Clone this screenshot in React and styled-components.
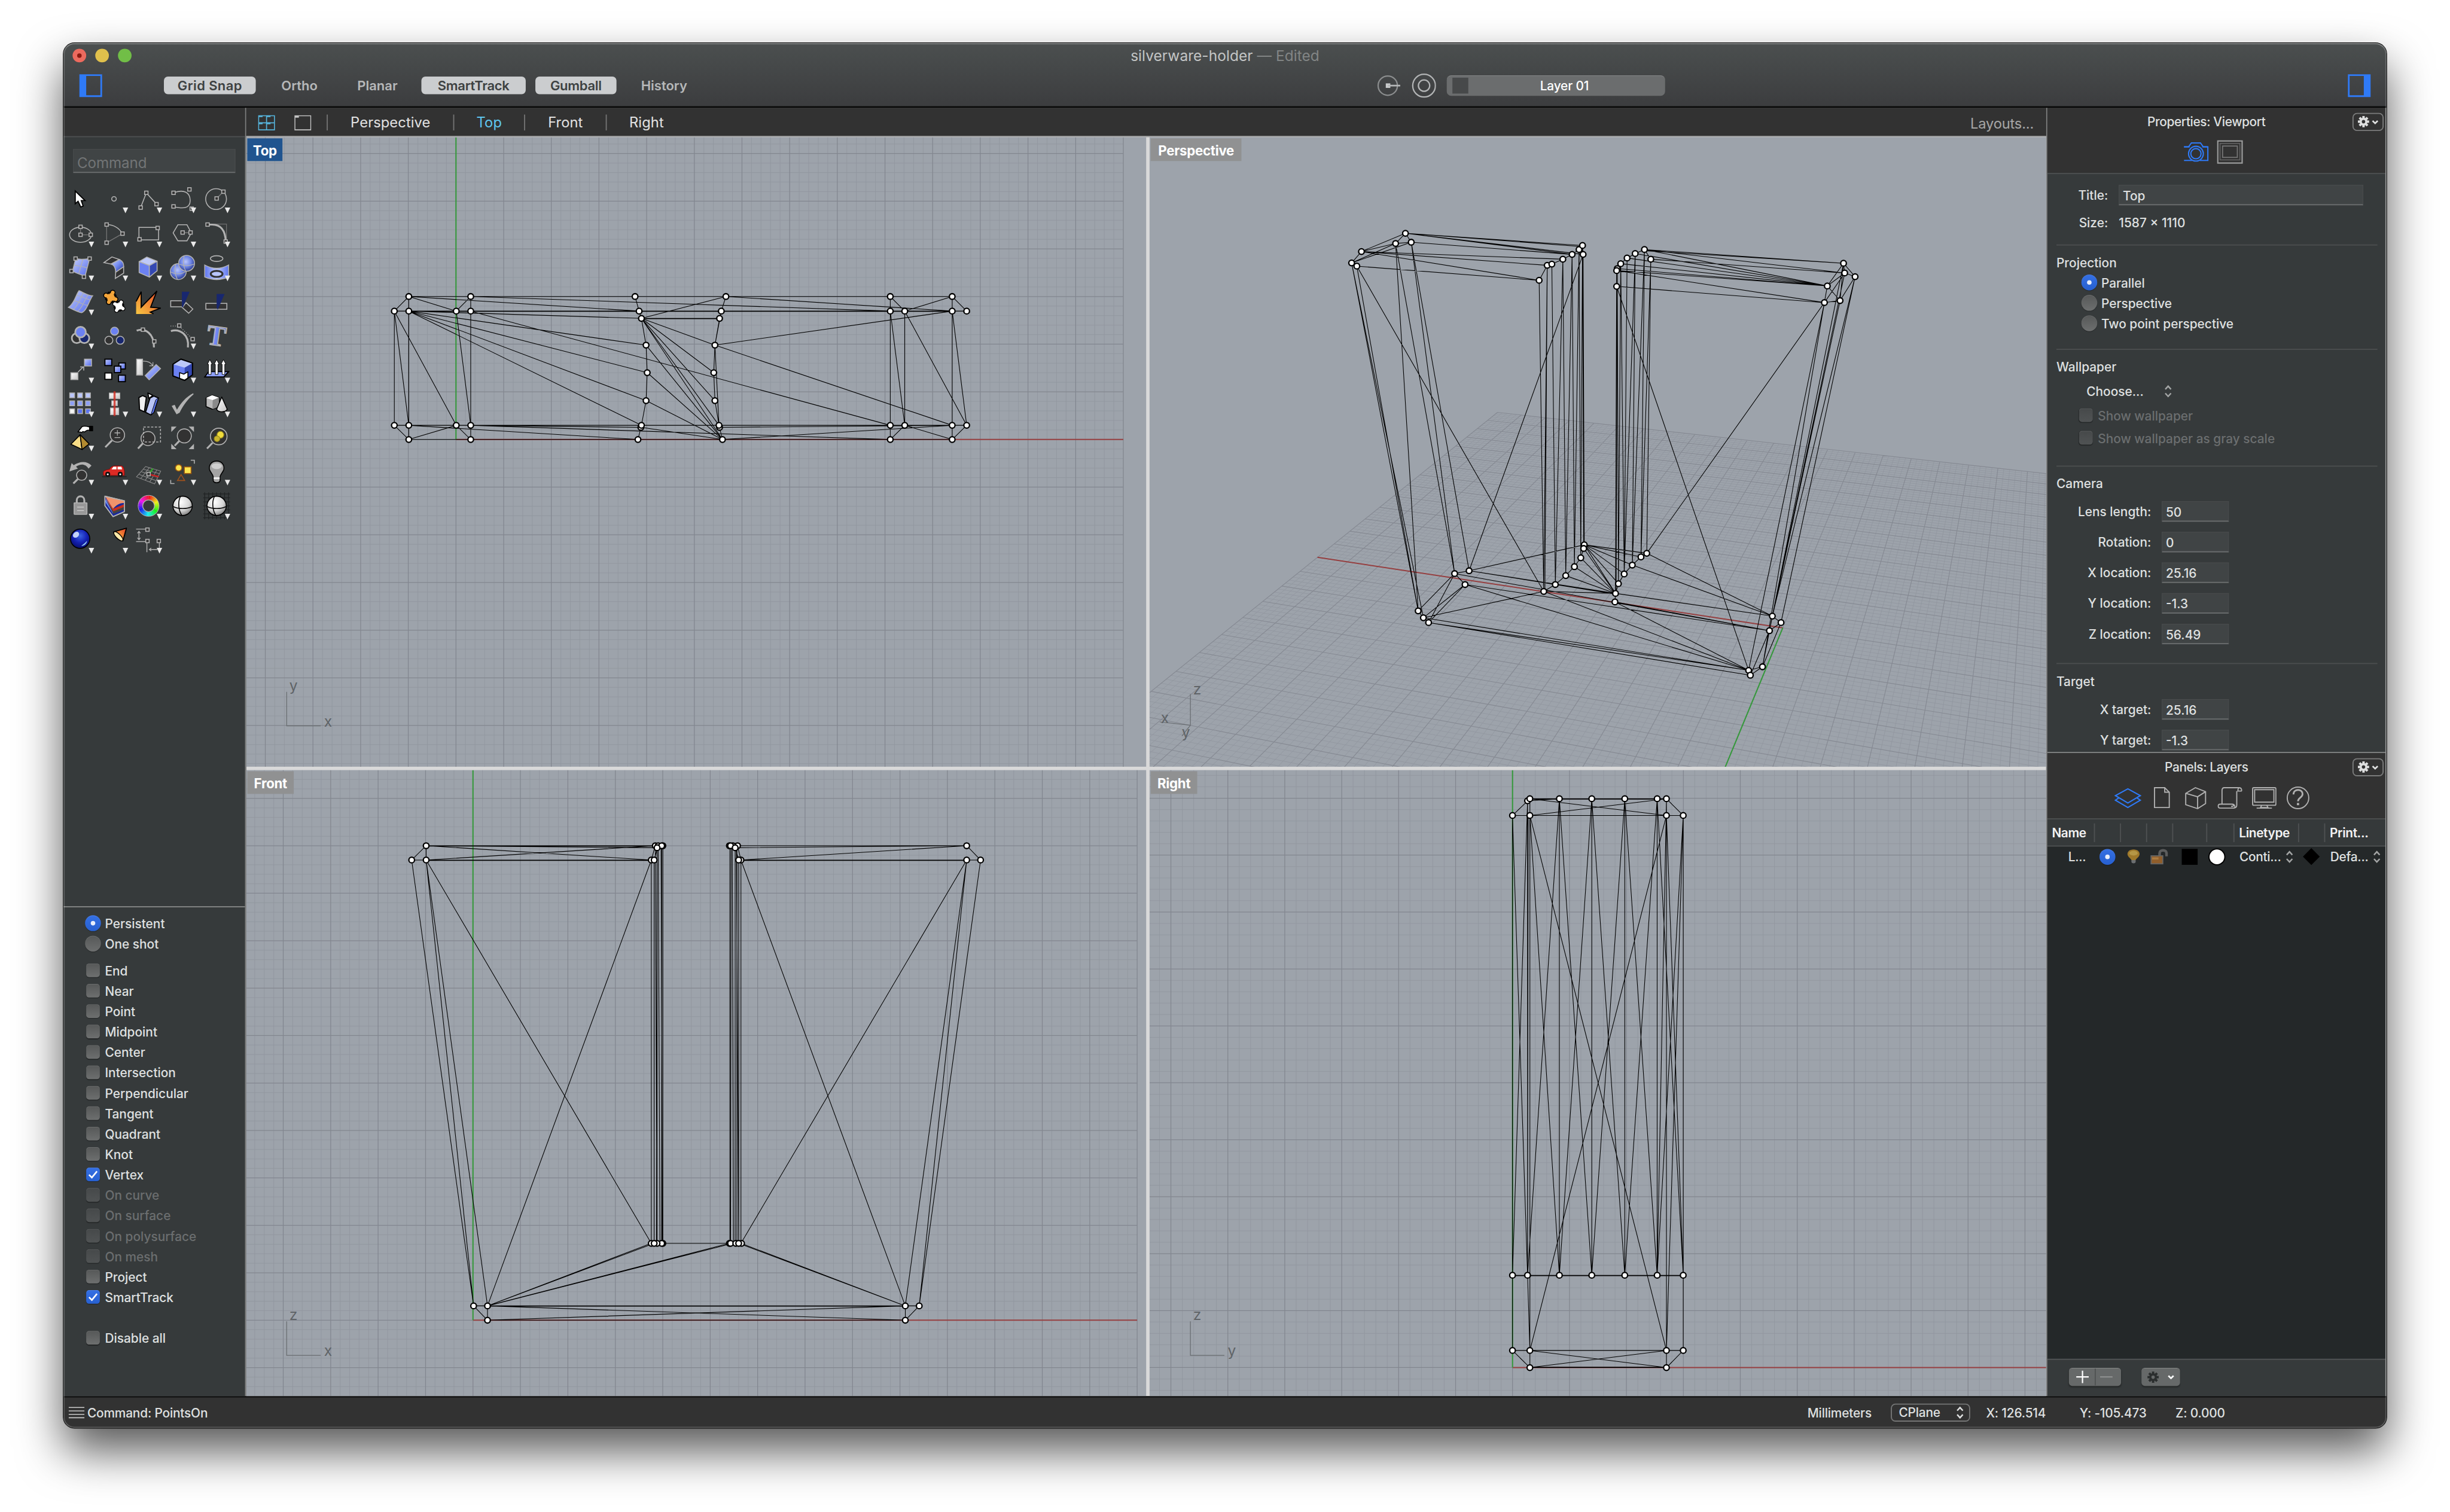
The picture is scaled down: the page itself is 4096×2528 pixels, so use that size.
import React from "react";
import styled, { createGlobalStyle, css } from "styled-components";

const SCALE = 4096 / 4320;

const Global = createGlobalStyle`
  html, body { margin: 0; padding: 0; background: #fff; overflow: hidden; }
  * { box-sizing: border-box; }
`;

/* ---------- shell ---------- */
const Stage = styled.div`
  width: 4096px;
  height: 2528px;
  overflow: hidden;
`;
const Desktop = styled.div`
  width: 4320px;
  height: 2666px;
  padding: 76px 112px 148px;
  transform: scale(${SCALE});
  transform-origin: 0 0;
  background: #fff;
  font-family: Inter, "Liberation Sans", sans-serif;
  font-size: 22px;
  font-weight: 500;
  letter-spacing: 0;
  color: #dfe0e0;
  white-space: nowrap;
`;
const Window = styled.div`
  position: relative;
  width: 4096px;
  height: 2442px;
  display: flex;
  flex-direction: column;
  border-radius: 19px;
  overflow: hidden;
  background: #000;
`;
const WindowShadow = styled.div`
  border-radius: 19px;
  box-shadow: 0 0 0 1px #000, 0 40px 80px rgba(0, 0, 0, 0.66);
`;
const WindowRim = styled.div`
  position: absolute;
  inset: 0;
  border-radius: 19px;
  border: 2px solid rgba(255, 255, 255, 0.2);
  border-top-color: rgba(255, 255, 255, 0.3);
  pointer-events: none;
`;

/* ---------- title bar ---------- */
const TitleBar = styled.header`
  height: 112px;
  flex: none;
  background: linear-gradient(#4b4f4f, #3c3d3f);
  margin-bottom: 2px;
  border-bottom: 1px solid #303132;
`;
const TitleRow = styled.div`
  height: 44px;
  display: grid;
  grid-template-columns: 1fr auto 1fr;
  align-items: center;
  padding: 0 16px;
`;
const Lights = styled.div`
  display: flex;
  gap: 16px;
`;
const Light = styled.span`
  width: 24px;
  height: 24px;
  border-radius: 50%;
  background: ${(p) => p.$color};
  display: grid;
  place-items: center;
  &::after {
    content: "";
    width: 8px;
    height: 8px;
    border-radius: 50%;
    background: ${(p) => (p.$dot ? "#8b1a10" : "transparent")};
  }
`;
const Title = styled.div`
  font-size: 25.8px;
  font-weight: 400;
  letter-spacing: 0.06px;
  color: #c3c5c5;
  padding-top: 1px;
`;
const Edited = styled.span`
  color: #828585;
`;
const ToolRow = styled.div`
  height: 61px;
  display: grid;
  grid-template-columns: 1fr auto 1fr;
  align-items: center;
  padding: 0 28px;
`;
const Modes = styled.div`
  display: flex;
  align-items: center;
  gap: 17px;
`;
const Mode = styled.button`
  all: unset;
  width: ${(p) => p.$w}px;
  height: 31px;
  border-radius: 7px;
  text-align: center;
  line-height: 32px;
  font-size: 23.2px;
  font-weight: 600;
  letter-spacing: ${(p) => p.$ls || 0}px;
  color: ${(p) => (p.$on ? "#3d4142" : "#b6b8b9")};
  background: ${(p) => (p.$on ? "#cbcdcf" : "transparent")};
`;
const PanelToggle = styled.span`
  width: 40px;
  height: 40px;
  border: 3px solid #2f7af6;
  ${(p) => (p.$side === "left" ? "border-left-width: 12px; margin-right: 109px;" : "border-right-width: 12px; justify-self: end;")}
`;
const LeftTools = styled.div`
  display: flex;
  align-items: center;
`;
const LayerTools = styled.div`
  display: flex;
  align-items: center;
  transform: translateX(522px);
`;
const LayerPill = styled.div`
  margin-left: 19px;
  width: 385px;
  height: 36px;
  border-radius: 8px;
  background: #6b6d6e;
  border-top: 1px solid #8a8c8d;
  display: grid;
  grid-template-columns: 28px 1fr;
  align-items: center;
  padding: 0 8px 0 10px;
  text-align: center;
  color: #fff;
  letter-spacing: -0.2px;
`;
const LayerSwatch = styled.span`
  height: 28px;
  background: #47494a;
`;

/* ---------- body ---------- */
const Body = styled.main`
  height: 2272px;
  flex: none;
  display: grid;
  grid-template-columns: 320px 3174px 596px;
  column-gap: 2px;
  padding-right: 2px;
  background: #7f8080;
`;
const Column = styled.section`
  display: flex;
  flex-direction: column;
  min-width: 0;
  min-height: 0;
  background: #363a3b;
`;
const SideHead = styled.div`
  height: 50px;
  background: #323232;
`;
const Rule = styled.div`
  height: 2px;
  flex: none;
  background: ${(p) => p.$c || "#4d4f50"};
`;
const inputLook = css`
  background: #404445;
  border: 1px solid #4b4e4f;
  border-bottom: 2px solid #6a6d6e;
`;
const CommandField = styled.div`
  ${inputLook}
  margin: 21px 17px 16px;
  height: 42px;
  padding-left: 6px;
  font-size: 25.5px;
  font-weight: 400;
  line-height: 45px;
  color: #727576;
  letter-spacing: -0.1px;
`;
const Palette = styled.div`
  flex: 1;
  display: grid;
  grid-template-columns: repeat(5, 60px);
  grid-auto-rows: 60px;
  padding-left: 2px;
  svg { overflow: visible; }
`;
const SnapList = styled.div`
  height: 862px;
  padding: 10px 0 0 38px;
`;
const CheckRow = styled.label`
  display: flex;
  align-items: center;
  height: 36px;
  margin-top: ${(p) => p.$gap || 0}px;
  color: ${(p) => (p.$off ? "#6b6e6f" : "inherit")};
`;
const Caption = styled.span`
  padding-top: 2px;
`;
const MarkSlot = styled.span`
  width: ${(p) => p.$w || 35}px;
  padding-left: ${(p) => p.$pl || 0}px;
  display: flex;
  align-items: center;
`;
const Radio = styled.span`
  width: 28px;
  height: 28px;
  border-radius: 50%;
  flex: none;
  background: ${(p) => (p.$on ? "linear-gradient(#3570e4,#2760d0)" : "linear-gradient(#565858,#6d6f6f)")};
  box-shadow: 0 1px 1px rgba(0, 0, 0, 0.35), inset 0 1px 0 rgba(255, 255, 255, 0.12);
  display: grid;
  place-items: center;
  &::after {
    content: "";
    width: 8px;
    height: 8px;
    border-radius: 50%;
    background: ${(p) => (p.$on ? "#e9effc" : "transparent")};
  }
`;
const Box = styled.span`
  width: 24px;
  height: 24px;
  margin-left: 2px;
  border-radius: 5px;
  flex: none;
  background: ${(p) =>
    p.$on ? "linear-gradient(#3570e4,#2760d0)" : p.$off ? "linear-gradient(#46494a,#505354)" : "linear-gradient(#565858,#6d6f6f)"};
  box-shadow: 0 1px 1px rgba(0, 0, 0, 0.35), inset 0 1px 0 rgba(255, 255, 255, 0.12);
  svg { display: block; }
`;

/* ---------- viewports ---------- */
const Center = styled.section`
  display: flex;
  flex-direction: column;
  background: #323232;
  overflow: hidden;
`;
const TabBar = styled.nav`
  height: 50px;
  flex: none;
  display: flex;
  align-items: center;
  padding: 2px 22px 0 21px;
  font-size: 25px;
  font-weight: 400;
  letter-spacing: 0.1px;
`;
const LayoutIcon = styled.svg`
  width: 30px;
  height: 27px;
  margin-right: 34px;
  flex: none;
`;
const Tab = styled.span`
  width: ${(p) => p.$w}px;
  height: 28px;
  line-height: 28px;
  text-align: center;
  border-left: 2px solid #727272;
  color: ${(p) => (p.$on ? "#5fc6ef" : "#e2e2e2")};
  ${(p) => p.$first && "margin-left: -7px;"}
`;
const Layouts = styled.span`
  margin-left: auto;
  padding-top: 3px;
  letter-spacing: -0.2px;
  color: #a6a6a6;
`;
const Views = styled.div`
  flex: 1;
  display: grid;
  grid-template-columns: 1587px 1581px;
  grid-template-rows: 1110px 1104px;
  gap: 6px;
  background: #d9d9d9;
  border-top: 2px solid #a2a3a4;
`;
const View = styled.div`
  position: relative;
  overflow: hidden;
  background: #9da3ab;
`;
const Drawing = styled.svg`
  display: block;
`;
const ViewTag = styled.span`
  position: absolute;
  left: 2px;
  top: 2px;
  height: 40px;
  width: ${(p) => p.$w}px;
  text-align: center;
  line-height: 43px;
  font-size: 23.5px;
  font-weight: 700;
  letter-spacing: -0.3px;
  color: #fff;
  background: ${(p) => (p.$on ? "#20548f" : "#909192")};
`;

/* ---------- right column ---------- */
const PanelHead = styled.div`
  height: 115px;
  flex: none;
  background: #323232;
`;
const PanelTitle = styled.div`
  height: 49px;
  display: grid;
  grid-template-columns: 23px 1fr 58px;
  align-items: center;
  text-align: center;
  letter-spacing: -0.4px;
`;
const GearButton = styled.span`
  width: 55px;
  height: 32px;
  border: 2px solid #7b7c7c;
  border-radius: 8px;
  display: flex;
  align-items: center;
  justify-content: center;
  gap: 4px;
  justify-self: start;
`;
const IconRow = styled.div`
  height: ${(p) => p.$h}px;
  display: flex;
  align-items: center;
  justify-content: center;
  gap: ${(p) => p.$gap || 0}px;
  padding-right: ${(p) => p.$inset || 0}px;
`;
const IconSlot = styled.span`
  width: 60px;
  display: flex;
  justify-content: center;
`;
const Form = styled.div`
  height: 1019px;
  flex: none;
  overflow: hidden;
  padding: 19px 14px 0 16px;
`;
const Field = styled.div`
  display: grid;
  grid-template-columns: ${(p) => p.$label}px ${(p) => p.$w}px;
  column-gap: 19px;
  align-items: center;
  height: 36px;
  margin-bottom: ${(p) => p.$mb || 0}px;
  > :first-child { text-align: right; }
`;
const FieldGroup = styled.div`
  padding-top: 14px;
`;
const Input = styled.span`
  ${inputLook}
  height: 36px;
  line-height: 36px;
  padding-left: 6px;
`;
const Section = styled.h3`
  margin: ${(p) => p.$mt}px 0 0;
  height: 34px;
  line-height: 34px;
  font-size: 22px;
  font-weight: 500;
`;
const Options = styled.div`
  padding-left: 44px;
`;
const Chooser = styled.div`
  display: flex;
  align-items: center;
  height: 36px;
  padding-left: 53px;
  margin: 8px 0 6px;
  gap: 36px;
`;
const Separator = styled.div`
  height: 2px;
  margin-top: ${(p) => p.$mt}px;
  background: #4b4e4f;
`;
const TableHead = styled.div`
  height: 46px;
  flex: none;
  display: flex;
  align-items: center;
  background: #35393a;
  color: #f3f3f3;
  font-weight: 600;
  letter-spacing: -0.4px;
`;
const HeadCell = styled.span`
  width: ${(p) => p.$w}px;
  height: 33px;
  line-height: 34px;
  flex: none;
  padding-left: 8px;
  border-right: 2px solid #4e5152;
  &:last-child { border: 0; }
`;
const Table = styled.div`
  flex: 1;
  background: #242829;
`;
const LayerRow = styled.div`
  height: 35px;
  display: flex;
  align-items: center;
  letter-spacing: -0.3px;
`;
const Cell = styled.span`
  width: ${(p) => p.$w}px;
  margin-left: ${(p) => p.$ml || 0}px;
  flex: none;
  display: flex;
  align-items: center;
  justify-content: ${(p) => p.$align || "center"};
  gap: 8px;
  svg { flex: none; }
`;
const Swatch = styled.span`
  width: 28px;
  height: 28px;
  background: #000;
`;
const Disc = styled.span`
  width: 30px;
  height: 30px;
  border-radius: 50%;
  background: #fff;
  border: 2px solid #000;
`;
const Diamond = styled.span`
  width: 21px;
  height: 21px;
  transform: rotate(45deg);
  background: #000;
`;
const PanelFoot = styled.div`
  height: 64px;
  flex: none;
  display: flex;
  padding: 14px 0 0 38px;
  gap: 36px;
`;
const FootButton = styled.span`
  width: ${(p) => p.$w}px;
  height: 32px;
  border-radius: 6px;
  background: #666969;
  border-top: 1px solid #858787;
  box-shadow: 0 2px 2px rgba(0, 0, 0, 0.25);
`;

/* ---------- status bar ---------- */
const StatusBar = styled.footer`
  height: 54px;
  margin-top: 2px;
  flex: none;
  display: flex;
  align-items: center;
  padding-left: 9px;
  background: #323232;
  letter-spacing: -0.2px;
`;
const StatusText = styled.span`
  width: ${(p) => p.$w}px;
  padding-left: ${(p) => p.$pl || 0}px;
  flex: none;
  padding-top: 2px;
`;
const PlanePicker = styled.span`
  width: 140px;
  height: 32px;
  border: 2px solid #757676;
  border-radius: 8px;
  display: flex;
  align-items: center;
  justify-content: space-between;
  padding: 0 9px 0 12px;
  margin-right: 28px;
`;

/* ---------- small glyphs ---------- */
const Updown = ({ c = "#a3a5a5" }) => (
  <svg width="14" height="24" viewBox="0 0 14 24" fill="none" stroke={c} strokeWidth="2.6">
    <path d="M2 8.5L7 3l5 5.5M2 15.5L7 21l5-5.5" />
  </svg>
);
const Gear = ({ c = "#dfe0e0", hole = "#323232" }) => (
  <svg width="21" height="21" viewBox="-11 -11 22 22">
    {[0, 45, 90, 135].map((a) => (
      <rect key={a} x="-2.2" y="-10.4" width="4.4" height="20.8" fill={c} transform={`rotate(${a})`} />
    ))}
    <circle r="7.2" fill={c} />
    <circle r="3.1" fill={hole} />
  </svg>
);
const Caret = ({ c = "#dfe0e0" }) => (
  <svg width="12" height="12" viewBox="0 0 12 12" fill="none" stroke={c} strokeWidth="2.8">
    <path d="M1.500 4L6 8.500l4.500-4.500" />
  </svg>
);
const Tick = () => (
  <svg width="24" height="24" viewBox="0 0 24 24" fill="none" stroke="#fff" strokeWidth="2.8">
    <path d="M5 12.500l5 5L19 6.500" />
  </svg>
);

/* ---------- wireframes ---------- */
const pair = (s) => s.trim().split(/\s+/).map((p) => p.split(",").map(Number));

function makeMap(kx, ky, ox, oy) {
  return ([x, y]) => [x * kx + ox, y * ky + oy];
}
const Wire = ({ map, edges }) => {
  const d = edges
    .trim()
    .split(/\s*;\s*/)
    .filter(Boolean)
    .map((run) => "M" + pair(run).map((p) => map(p).map((v) => v.toFixed(1)).join(" ")).join("L"))
    .join("");
  return <path d={d} fill="none" stroke="#000" strokeWidth="1.150" />;
};
const Dots = ({ map, at }) =>
  pair(at).map((p, i) => {
    const [x, y] = map(p);
    return <circle key={i} cx={x} cy={y} r="5" fill="#fff" stroke="#000" strokeWidth="2.400" />;
  });

const MINOR = "#9297a0";
const MAJOR = "#82868f";
const RED = "#963f40";
const GREEN = "#36983c";

const OrthoGrid = ({ w, h, x0, y0, step }) => {
  const right = Math.min(w, x0 + 14 * step);
  let minor = "";
  let major = "";
  for (let i = -70; i <= 70; i++) {
    const x = x0 + (i * step) / 5;
    const y = y0 - (i * step) / 5;
    let seg = "";
    if (x > 0 && x < w && x <= right + 1) seg += `M${x.toFixed(1)} 0V${h}`;
    if (y > 0 && y < h) seg += `M0 ${y.toFixed(1)}H${right.toFixed(1)}`;
    if (i % 5) minor += seg;
    else if (i) major += seg;
    else major += `M${x0} ${y0}V${h}M0 ${y0}H${x0}`;
  }
  return (
    <>
      <path d={minor} stroke={MINOR} strokeWidth="1" />
      <path d={major} stroke={MAJOR} strokeWidth="1.300" />
      <path d={`M${x0} ${y0}H${right}`} stroke={RED} strokeWidth="2.200" />
      <path d={`M${x0} ${y0}V0`} stroke={GREEN} strokeWidth="2.200" />
    </>
  );
};
const AxisMark = ({ x, y, h, v }) => (
  <g fill="none" stroke="#686c70" strokeWidth="1.300">
    <path d={`M${x} ${y - 60}V${y}H${x + 60}`} />
    <g fill="#5f6367" stroke="none" fontFamily="Inter, sans-serif" fontSize="26" fontWeight="400" textAnchor="middle">
      <text x={x + 12} y={y - 62}>{v}</text>
      <text x={x + 73} y={y + 1}>{h}</text>
    </g>
  </g>
);

const topMap = makeMap(1.02041, 0.714286, -4, -2);
const TopDrawing = () => (
  <Drawing width="1587" height="1110">
    <OrthoGrid w={1587} h={1110} x0={370} y0={533} step={84.05} />
    <Wire
      map={topMap}
      edges="285,396 1224,396;260,432 1249,432;285,433 1224,433;687,450 822,450;687,451 822,451;260,714 1249,714;285,749 1224,749;
      260,432 285,396 285,432;285,396 367,432;285,396 683,432;367,432 392,396 392,432;392,396 1117,432;
      676,396 683,432 687,450 695,516 697,584 695,653 687,714 681,749;
      833,396 825,432 822,450 814,516 812,584 814,653 821,714 827,749;
      833,396 687,450;833,396 1224,432;1117,432 1117,396 1142,432 1224,396 1224,432;1224,396 1249,432;
      285,432 687,450;285,432 695,516;285,432 697,584;285,432 695,653;285,432 687,714;392,432 1117,714;
      687,450 814,516;687,450 812,584;687,450 814,653;687,450 821,714;687,450 827,749;695,516 827,749;697,584 827,749;695,653 827,749;687,719 827,749;
      814,516 1224,432;814,516 1224,714;814,516 821,714;825,432 814,516;
      260,714 260,432 285,714 285,432;260,432 367,714;367,432 392,714 392,432;
      1117,432 1117,714;1117,432 1142,714 1142,432 1249,714 1224,432 1224,714;
      260,714 285,749 285,714 681,749;285,749 367,714 392,749 392,714 1117,749 1117,714;392,714 687,719;
      822,719 1224,714;827,749 1224,714;1117,749 1142,714 1224,749 1224,714;1224,749 1249,714"
    />
    <Dots
      map={topMap}
      at="285,396 392,396 676,396 833,396 1117,396 1224,396 260,432 285,432 367,432 392,432 683,432 825,432 1117,432 1142,432 1224,432 1249,432
      687,450 822,450 695,516 814,516 697,584 812,584 695,653 814,653 686,719 822,719 260,714 285,714 367,714 392,714 687,714 821,714 1117,714 1142,714 1224,714 1249,714
      285,749 392,749 681,749 827,749 1117,749 1224,749"
    />
    <AxisMark x={71.5} y={1038} v="y" h="x" />
  </Drawing>
);

const frontMap = makeMap(1.02041, 0.72066, -4, -18);
const FrontDrawing = () => (
  <Drawing width="1587" height="1104">
    <OrthoGrid w={1587} h={1104} x0={400} y0={970} step={83.65} />
    <Wire
      map={frontMap}
      edges="315,210 724,210;315,211 714,211;315,210 714,215;315,210 704,245;315,245 711,210;290,245 709,245;315,246 709,246;290,245 315,210 315,245;704,245 711,210;709,245 716,210;
      840,210 1249,210;849,215 1249,210;1249,210 859,245;859,245 1273,245;855,246 1249,246;1249,210 1273,245;853,210 859,245;849,215 855,245;
      704,245 704,1183;709,245 709,1183;714,215 714,1183;711,210 714,1183;716,210 719,1183;722,210 722,1183;724,210 724,1183;721,210 723,1183;714,215 713,1183;
      840,210 840,1183;842,210 841,1183;844,210 846,1183;849,215 849,1183;852,210 852,1183;855,245 855,1183;859,245 859,1183;851,210 855,1183;
      290,245 397,1336 315,245 421,1336 704,245;315,245 704,1183;
      859,245 1143,1336 1249,245 1167,1336 1273,245;1249,245 859,1183;
      704,1183 421,1336 709,1183;839,1183 421,1336 845,1183;859,1183 1143,1336 855,1183;704,1183 860,1183;
      397,1336 1167,1336;421,1337 1143,1337;421,1336 1143,1371 421,1371 1143,1336;397,1336 421,1371 421,1336;1143,1336 1143,1371 1167,1336"
    />
    <Dots
      map={frontMap}
      at="315,210 724,210 711,210 716,210 722,210 714,215 839,210 853,210 845,210 841,210 849,215 1249,210 290,245 315,245 704,245 709,245 859,245 855,245 1249,245 1273,245
      724,1183 722,1183 714,1183 704,1183 709,1183 839,1183 841,1183 850,1183 860,1183 855,1183 397,1336 421,1336 1143,1336 1167,1336 421,1371 1143,1371"
    />
    <AxisMark x={71.5} y={1032} v="z" h="x" />
  </Drawing>
);

const rightMap = makeMap(1.02041, 0.72066, -7, -18);
const RightDrawing = () => (
  <Drawing width="1581" height="1104">
    <OrthoGrid w={1581} h={1104} x0={640} y0={1053.5} step={100.4} />
    <Wire
      map={rightMap}
      edges="660,95 900,95;664,96 900,96;660,100 664,95;664,95 900,136;664,136 900,95;660,100 715,95;634,136 929,136;634,136 664,95 664,136;900,136 900,95 929,136;
      634,136 634,1445;634,136 660,1261;660,100 634,1261;660,100 660,1261;664,95 664,1445;661,136 660,1261;664,136 715,1261;715,95 660,1261;664,136 900,1445;900,136 664,1445;
      715,95 715,1261;771,95 771,1261;828,95 828,1261;884,95 884,1261;715,95 771,1261;771,95 715,1261;771,95 828,1261;828,95 771,1261;828,95 884,1261;884,95 828,1261;
      900,95 884,1261;884,95 929,1261;929,136 884,1261;929,136 929,1445;900,136 900,1445;929,136 900,1445;900,136 929,1261;660,1261 664,1445;
      634,1261 929,1261;634,1262 929,1262;634,1445 929,1445;664,1487 900,1487;664,1486 900,1486;664,1445 900,1487;664,1487 900,1445;634,1445 664,1487 664,1445;900,1445 900,1487 929,1445"
    />
    <Dots
      map={rightMap}
      at="660,100 664,95 715,95 771,95 828,95 884,95 900,95 634,136 664,136 900,136 929,136 634,1261 660,1261 715,1261 771,1261 828,1261 884,1261 929,1261
      634,1445 664,1445 900,1445 929,1445 664,1487 900,1487"
    />
    <AxisMark x={72} y={1032} v="z" h="y" />
  </Drawing>
);

const perspMap = makeMap(1.02041, 0.714286, -7, -2);
const ground = (X, Y) => {
  const w = 0.00802 * X - 0.02548 * Y + 1;
  return perspMap([(-55.05 * X - 40.2 * Y + 1101) / w, (-4.09 * X + 11.06 * Y + 1214) / w]);
};
const seg = (a, b) => `M${a.map((v) => v.toFixed(1)).join(" ")}L${b.map((v) => v.toFixed(1)).join(" ")}`;
const PerspectiveGrid = () => {
  let minor = "";
  let major = "";
  for (let i = -70; i <= 70; i++) {
    const t = i / 5;
    const s = seg(ground(t, -14), ground(t, 14)) + seg(ground(-14, t), ground(14, t));
    if (i % 5) minor += s;
    else major += s;
  }
  return (
    <>
      <path d={minor} stroke={MINOR} strokeWidth="0.900" />
      <path d={major} stroke="#858992" strokeWidth="1.200" />
      <path d={seg(ground(0, 0), ground(14, 0))} stroke={RED} strokeWidth="2.200" />
      <path d={seg(ground(0, 0), ground(0, 14))} stroke={GREEN} strokeWidth="2.200" />
    </>
  );
};
const PerspectiveDrawing = () => (
  <Drawing width="1581" height="1110">
    <PerspectiveGrid />
    <Wire
      map={perspMap}
      edges="373,285 449,240 755,270;449,240 756,273;449,240 756,292;449,240 737,292;449,240 432,265 459,262 449,240;373,285 432,265;373,285 356,313 365,321 680,356;356,313 459,262;356,313 432,265;
      459,262 737,292;373,285 680,356;373,285 721,304;373,285 694,319;755,270 749,280 737,292 721,304 702,316 694,319 680,356;755,270 756,292;
      862,280 1206,314;862,283 1206,314;862,280 1178,370;862,280 1208,338;873,304 1208,338;846,290 1178,370;832,301 1178,370;821,315 1178,370;815,327 1178,370;814,332 1178,370;814,332 1173,411;814,371 1173,411;
      873,304 862,280 846,290 832,301 821,315 815,327 814,371;
      1226,347 1206,314 1208,338 1226,347 1200,406 1173,411 1178,370 1206,314 1200,406 1178,370 1208,338 1173,411;
      356,313 471,1172;365,321 471,1172;356,313 480,1189;365,321 688,1124;432,265 471,1172;432,265 534,1080;459,262 534,1080;459,262 559,1073;756,292 559,1073;
      680,356 688,1124;694,319 688,1124;694,319 690,1124;702,316 708,1107;721,304 708,1107;721,304 726,1085;737,292 726,1085;737,292 741,1063;749,280 741,1063;749,280 752,1041;755,270 752,1041;755,270 757,1018;755,270 758,1009;756,292 758,1009;
      814,371 812,1129;814,371 1042,1319;814,332 812,1129;815,327 813,1129;815,327 817,1105;821,315 817,1105;821,315 827,1081;832,301 827,1081;846,290 827,1081;846,290 841,1059;862,280 841,1059;862,280 856,1039;873,304 856,1039;873,304 866,1030;
      866,1030 1173,411;1173,411 1042,1319;1173,411 1066,1310;1200,406 1078,1221;1200,406 1083,1185;1208,338 1083,1185;1206,314 1083,1185;1226,347 1098,1201;1226,347 1083,1185;
      559,1073 758,1009 812,1129;757,1018 812,1129;752,1041 812,1129;741,1063 812,1129;726,1085 812,1129;708,1107 812,1129;688,1124 812,1129;
      758,1009 866,1030;758,1009 856,1039;758,1009 841,1059;758,1009 827,1081;758,1009 817,1105;758,1009 757,1018 752,1041 741,1063 726,1085 708,1107 688,1124;
      866,1030 856,1039 841,1059 827,1081 817,1105 812,1129 811,1150;866,1030 1083,1185;841,1059 1083,1185;812,1129 1083,1185;
      559,1073 812,1129;559,1073 812,1131;559,1073 708,1107;534,1080 1078,1221;552,1107 1078,1221;811,1150 1078,1221;
      559,1073 534,1080 552,1107 489,1201 534,1080 471,1172 480,1189 489,1201;552,1107 480,1189;480,1189 688,1124;688,1124 1042,1319;552,1107 1042,1319;811,1150 1042,1319;
      480,1189 1042,1319;489,1201 1042,1319;489,1201 1045,1331;1042,1319 1045,1331 1066,1310 1042,1319;1083,1185 1098,1201 1078,1221 1083,1185;1098,1201 1066,1310 1078,1221 1045,1331;1083,1185 1066,1310"
    />
    <Dots
      map={perspMap}
      at="449,240 432,265 459,262 373,285 356,313 365,321 680,356 694,319 702,316 721,304 737,292 749,280 755,270 756,292
      862,280 873,304 846,290 832,301 821,315 815,327 814,332 814,371 1206,314 1208,338 1226,347 1178,370 1200,406 1173,411
      534,1080 559,1073 552,1107 471,1172 480,1189 489,1201 688,1124 708,1107 726,1085 741,1063 752,1041 758,1009 757,1018 812,1129 811,1150 817,1105 827,1081 841,1059 856,1039 866,1030
      1083,1185 1098,1201 1078,1221 1066,1310 1042,1319 1045,1331"
    />
    <path d="M72 982V1037L18 1031M72 1037L57 1056" fill="none" stroke="#686c70" strokeWidth="1.300" />
    <g fill="#5f6367" fontFamily="Inter, sans-serif" fontSize="26" fontWeight="400" textAnchor="middle">
      <text x="84" y="982">z</text>
      <text x="27" y="1033">x</text>
      <text x="64" y="1058">y</text>
    </g>
  </Drawing>
);

/* ---------- palette icons: each is drawn on a 180 x 180 field ---------- */
const G = "#b2b2b2";
const DK = "#323232";
const BL = "#6b81f2";
const NV = "#18276f";
const Line = (p) => <path fill="none" stroke={G} strokeWidth="5" {...p} />;
const Sq = ({ at }) =>
  pair(at).map(([x, y], i) => (
    <rect key={i} x={x - 9} y={y - 9} width="18" height="18" fill={DK} stroke={G} strokeWidth="5" />
  ));
const Lens = ({ x, y, r, to }) => (
  <>
    <Line d={to} strokeWidth="10" />
    <circle cx={x} cy={y} r={r} fill={DK} stroke={G} strokeWidth="5" />
  </>
);
const Ball = ({ x = 84, y = 93, r = 51, fill = "url(#whiteBall)" }) => (
  <g stroke="#000" strokeWidth="5" fill="none">
    <circle cx={x} cy={y} r={r} fill={fill} />
    <path d={`M${x - 12} ${y - r + 2}C${x - 26} ${y - 20} ${x - 22} ${y + 25} ${x - 4} ${y + r}M${x - r + 1} ${y + 4}C${x - 20} ${y + 18} ${x + 20} ${y + 18} ${x + r - 1} ${y + 4}`} />
  </g>
);
const pieceShapes = (
  <>
    <rect x="-20" y="-20" width="40" height="40" rx="4" />
    <circle cx="0" cy="-27" r="10" />
    <circle cx="27" cy="0" r="10" />
    <circle cx="0" cy="27" r="10" />
    <circle cx="-27" cy="0" r="10" />
  </>
);
const PuzzlePiece = ({ fill }) => (
  <>
    <g fill="#000" stroke="#000" strokeWidth="10">{pieceShapes}</g>
    <g fill={fill}>{pieceShapes}</g>
    <g fill="#000"><circle cx="-17" cy="-17" r="5" /><circle cx="17" cy="-17" r="5" /><circle cx="17" cy="17" r="5" /><circle cx="-17" cy="17" r="5" /></g>
  </>
);
const Defs = () => (
  <svg width="0" height="0" style={{ display: "block" }}>
    <defs>
      <linearGradient id="blue" x1="0" y1="0" x2="1" y2="1">
        <stop offset="0" stopColor="#c3cdfb" />
        <stop offset="1" stopColor="#5068ec" />
      </linearGradient>
      <linearGradient id="blueDown" x1="0" y1="0" x2="1" y2="1">
        <stop offset="0" stopColor="#ccd5ff" />
        <stop offset="0.5" stopColor="#7088f0" />
        <stop offset="1" stopColor="#1d2f8a" />
      </linearGradient>
      <linearGradient id="letter" x1="0" y1="0" x2="1" y2="0">
        <stop offset="0" stopColor="#8ea2f8" />
        <stop offset="0.6" stopColor="#6b81f2" />
        <stop offset="1" stopColor="#4a5fd0" />
      </linearGradient>
      <linearGradient id="band">
        <stop offset="0" stopColor="#5c74f0" />
        <stop offset="0.5" stopColor="#c2cdfc" />
        <stop offset="1" stopColor="#5c74f0" />
      </linearGradient>
      <radialGradient id="blueBall" cx="0.45" cy="0.4" r="0.65">
        <stop offset="0" stopColor="#b9c5fb" />
        <stop offset="0.5" stopColor="#6f86e6" />
        <stop offset="1" stopColor="#203080" />
      </radialGradient>
      <radialGradient id="whiteBall" cx="0.4" cy="0.3" r="0.75">
        <stop offset="0" stopColor="#fff" />
        <stop offset="0.6" stopColor="#d4d4d4" />
        <stop offset="1" stopColor="#777" />
      </radialGradient>
      <radialGradient id="deepBall" cx="0.5" cy="0.35" r="0.7">
        <stop offset="0" stopColor="#3b62e0" />
        <stop offset="0.5" stopColor="#1421b4" />
        <stop offset="1" stopColor="#050a60" />
      </radialGradient>
      <linearGradient id="fire" x1="0" y1="1" x2="1" y2="0">
        <stop offset="0" stopColor="#f8c743" />
        <stop offset="0.6" stopColor="#ee7a32" />
        <stop offset="1" stopColor="#e0402a" />
      </linearGradient>
      <linearGradient id="paper" x1="0" y1="0" x2="1" y2="1">
        <stop offset="0" stopColor="#fff" />
        <stop offset="1" stopColor="#c4c4c4" />
      </linearGradient>
    </defs>
  </svg>
);

const tools = [
  [0, <path d="M56 47V115L71 102L85 132L98 127L88 98H108Z" fill="#fff" stroke="#000" strokeWidth="6" />],
  [1, <circle cx="81" cy="89" r="12" fill="none" stroke={G} strokeWidth="5" />],
  [1, <><Line d="M42 135L72 57L126 117" /><Sq at="42,135 72,57 126,117" /></>],
  [1, <><Line d="M36 57C90 36 124 55 124 98C124 140 90 142 36 131" /><Sq at="36,57 120,39 36,129 132,141" /></>],
  [1, <><circle cx="81" cy="90" r="55" fill="none" stroke={G} strokeWidth="5" /><Line d="M84 87L119 51" stroke="#777" /><Sq at="84,87 120,51" /></>],

  [1, <><ellipse cx="84" cy="99" rx="58" ry="40" fill="none" stroke={G} strokeWidth="5" /><Line d="M84 57V99H138" stroke="#777" strokeWidth="4" /><Sq at="84,57 84,99 138,99" /></>],
  [1, <><Line d="M42 45V141L126 93" stroke="#777" strokeWidth="4" /><Line d="M42 45C80 45 108 64 126 93" /><Sq at="42,45 42,141 126,93" /></>],
  [1, <><rect x="33" y="60" width="104" height="66" fill="none" stroke={G} strokeWidth="5" /><Sq at="132,63 36,123" /></>],
  [1, <><path d="M34 89L59 46H107L130 89L107 131H59Z" fill="none" stroke={G} strokeWidth="5" /><Line d="M84 88H126" stroke="#777" /><Sq at="84,87 126,87" /></>],
  [1, <><Line d="M36 42H136V135" stroke="#6f7070" strokeWidth="4" /><Line d="M36 45H60C105 45 130 72 132 135" strokeWidth="10" /><Sq at="36,45 132,135" /></>],

  [1, <><path d="M58 45C85 52 110 48 132 45L108 138C84 128 56 122 42 111Z" fill="url(#blue)" stroke={G} strokeWidth="5" /><Line d="M96 50L74 126M52 80C76 84 100 88 120 94" strokeWidth="4" /><Sq at="58,45 132,45 36,111 102,141" /></>],
  [1, <g stroke={G} strokeWidth="5"><path d="M28 66L70 36L110 50L65 74Z" fill={DK} /><path d="M132 88V122L88 150L90 117Z" fill={DK} /><path d="M110 50C130 60 132 72 132 88L90 117C90 92 80 78 65 74Z" fill="url(#blueDown)" /></g>],
  [1, <g stroke={G} strokeWidth="5" strokeLinejoin="round"><path d="M34 61L74 37L129 59L88 82Z" fill="#bfcaf9" /><path d="M34 61L88 82V143L34 119Z" fill={BL} /><path d="M129 59V110L88 143V82Z" fill="#3448b2" /></g>],
  [1, <g stroke={G} strokeWidth="5"><circle cx="61" cy="114" r="42" fill="url(#blueBall)" /><path d="M48 74C40 100 44 130 56 155M20 116C45 128 75 128 98 116" fill="none" strokeWidth="4" /><circle cx="105" cy="70" r="42" fill="url(#blueBall)" /><path d="M92 31C84 55 88 88 100 111M64 74C90 84 120 84 146 74" fill="none" strokeWidth="4" /></g>],
  [1, <g stroke={G} strokeWidth="5" fill="none"><ellipse cx="84" cy="45" rx="33" ry="15" /><path d="M21 79Q84 113 147 79V142Q84 170 21 142Z" fill="url(#band)" /><ellipse cx="84" cy="126" rx="31" ry="16" stroke={DK} strokeWidth="10" fill="#b9c5fb" /></g>],

  [1, <g stroke={G} strokeWidth="5" fill="none"><path d="M76 35C100 44 120 60 148 62C128 90 118 140 90 151C66 148 46 134 20 123C54 100 58 58 76 35Z" fill="url(#blue)" /><path d="M52 88C80 94 100 112 122 112M100 46C84 66 76 112 44 136M124 58C104 84 96 126 66 145M66 60C92 64 112 82 138 82" strokeWidth="3.500" /></g>],
  [0, <><g transform="translate(64 70) rotate(22)"><PuzzlePiece fill="#f4a53a" /></g><g transform="translate(107 117) rotate(30) scale(.9)"><PuzzlePiece fill="#fff" /></g></>],
  [0, <><path d="M18 92L45 42V122L128 37L95 122L148 127L93 148L110 158H18Z" fill="url(#fire)" /><path d="M18 92L45 40V122L128 37L95 122L148 127L93 148L110 157" fill="none" stroke="#000" strokeWidth="6" /></>],
  [0, <><rect x="21" y="88" width="62" height="32" fill={DK} stroke={G} strokeWidth="5" /><path d="M82 124L102 98L138 132L116 154Z" fill={DK} stroke={G} strokeWidth="5" /><path d="M80 40H121L84 125L80 118Z" fill={NV} /></>],
  [0, <><rect x="27" y="102" width="111" height="31" fill={DK} stroke={G} strokeWidth="5" /><path d="M84 52H126L90 135L84 125Z" fill={NV} /></>],

  [1, <g stroke={G} strokeWidth="9"><circle cx="64" cy="106" r="26" fill={DK} /><circle cx="104" cy="106" r="26" fill={NV} /><circle cx="84" cy="74" r="28" fill={BL} /></g>],
  [0, <g stroke={G} strokeWidth="5"><circle cx="84" cy="69" r="21" fill={BL} /><circle cx="54" cy="117" r="21" fill={DK} /><circle cx="114" cy="117" r="21" fill={NV} /></g>],
  [0, <><Line d="M21 66C66 50 114 82 112 155" strokeWidth="10" /><Sq at="54,61 114,123" /></>],
  [1, <><Line d="M22 68C70 54 120 88 112 155" strokeWidth="10" /><Line d="M20 42H66L136 110" strokeDasharray="4 8" strokeWidth="4" /><Sq at="66,39 137,111" /></>],
  [0, <text x="83" y="144" fontFamily="Liberation Serif, serif" fontWeight="700" fontSize="150" textAnchor="middle" fill="url(#letter)" stroke={G} strokeWidth="6" transform="rotate(8 83 93)">T</text>],

  [1, <><rect x="33" y="109" width="37" height="36" fill="url(#paper)" stroke={G} strokeWidth="5" /><rect x="105" y="37" width="37" height="36" fill="url(#blue)" stroke={G} strokeWidth="5" /><Line d="M71 105L100 76M82 78H101V97" /></>],
  [0, <g stroke="#000" strokeWidth="6"><rect x="33" y="37" width="36" height="34" fill="url(#blue)" /><rect x="107" y="57" width="34" height="32" fill="url(#blue)" /><rect x="83" y="74" width="34" height="34" fill="url(#blue)" /><rect x="33" y="110" width="36" height="34" fill="#fff" /><rect x="105" y="122" width="36" height="34" fill="url(#blue)" /></g>],
  [0, <><rect x="21" y="37" width="31" height="84" fill="url(#paper)" stroke={G} strokeWidth="5" /><path d="M124 66L147 87L87 146L66 124Z" fill="url(#blue)" stroke={G} strokeWidth="5" /><Line d="M54 48C80 46 96 56 105 70M88 72H107V53" strokeWidth="4" /></>],
  [1, <g stroke="#000" strokeWidth="6" strokeLinejoin="round"><path d="M33 64L75 37L136 58V120L95 149L33 126Z" fill={BL} /><path d="M33 64L75 37L136 58L95 82Z" fill="#bcc8f8" stroke="none" /><path d="M136 58V120L95 149V82Z" fill="#3448b2" stroke="none" /><path d="M68 140V108L90 116L112 104V138L95 149Z" fill="#fff" strokeWidth="5" /><path d="M33 64L75 37L136 58V120L95 149L33 126Z" fill="none" /></g>],
  [1, <><path d="M21 131L42 103H147L122 131Z" fill="#8ea0f8" stroke="#000" strokeWidth="6" />{[48, 84, 120].map((x) => <path key={x} d={`M${x - 7} 118V64H${x - 13}L${x} 39L${x + 13} 64H${x + 7}V118Z`} fill="#fff" stroke="#000" strokeWidth="3" />)}</>],

  [1, [0, 1, 2].map((r) => [0, 1, 2].map((c) => <rect key={`${r}${c}`} x={27 + c * 42} y={36 + r * 42} width="25" height="25" fill={r === 2 && c === 0 ? "#f4f4f4" : ["#b9c5fb", "#8c9ef6", "#5c74f0"][r]} stroke={G} strokeWidth="5" />))],
  [1, <><g fill="url(#paper)" stroke={G} strokeWidth="4"><rect x="56" y="36" width="56" height="30" /><rect x="69" y="77" width="30" height="26" /><rect x="62" y="115" width="44" height="36" /></g><path d="M84 27V158" stroke="#d12a20" strokeWidth="11" opacity="0.8" /></>],
  [1, <g stroke="#000" strokeWidth="6" strokeLinejoin="round"><path d="M80 36L106 48L86 66Z" fill="#fff" /><path d="M33 60L52 50L72 58L62 136L36 124Z" fill="#efefef" /><path d="M68 138L92 62L112 52L136 62L112 138L96 152Z" fill="#b9c5f6" /><path d="M96 152L122 72L136 62L112 138Z" fill="#5b74ec" strokeWidth="3" /></g>],
  [1, <path d="M26 105L42 98L54 124C76 88 100 58 140 37L142 43C114 66 88 100 68 140L52 149Z" fill={G} />],
  [1, <g stroke="#000" strokeWidth="5" strokeLinejoin="round"><path d="M28 62L60 48L96 60V108L62 122L28 108Z" fill="#b9b9b9" /><path d="M28 62L60 48L96 60L63 74Z" fill="#fff" stroke="none" /><path d="M63 74L96 60V108L62 122Z" fill="#8a8a8a" stroke="none" /><path d="M111 57L140 122C130 140 92 140 84 122Z" fill="url(#paper)" /></g>],

  [1, <g stroke="#000" strokeWidth="5" strokeLinejoin="round"><path d="M33 127L82 77L92 155Z" fill="#f7dc86" /><path d="M82 77L130 125L92 155Z" fill="#b28a30" /><path d="M70 62L92 34C104 28 118 32 132 36V52C122 52 114 54 106 62L96 60L88 66L82 62Z" fill="#fff" /><path d="M132 32H148V56H132Z" fill="#000" /></g>],
  [0, <><Lens x={99} y={78} r={38} to="M70 107L35 143" /><Line d="M99 52V82M84 67H114M84 92H114" strokeWidth="4" /></>],
  [0, <><Lens x={81} y={97} r={37} to="M54 122L28 150" /><rect x="57" y="36" width="90" height="79" fill="none" stroke={G} strokeWidth="5" strokeDasharray="12 8" /></>],
  [0, <><Lens x={93} y={83} r={37} to="M66 110L42 135" /><path d="M24 34H52L24 62ZM144 34V62L116 34ZM24 153V125L52 153ZM144 153H116L144 125Z" fill={G} /></>],
  [0, <><Lens x={95} y={86} r={44} to="M62 120L33 150" /><g stroke="#9a8a20" strokeWidth="4"><circle cx="104" cy="77" r="18" fill="#f0dc3c" /><circle cx="86" cy="98" r="15" fill="#c9b52e" /></g></>],

  [1, <><Lens x={90} y={111} r={27} to="M70 131L46 155" /><path d="M37 47L25 91L70 76L60 66C84 50 110 50 126 76L142 60C118 34 80 36 48 58Z" fill={G} /></>],
  [1, <><path d="M18 119H148" stroke="#222" strokeWidth="5" /><path d="M25 110V92C32 84 44 82 58 80C64 66 74 62 90 62H122C132 66 134 78 136 92V112H30Z" fill="#dd2b25" stroke="#900" strokeWidth="3" /><path d="M68 80L78 66H94V80ZM100 66H120L124 80H100Z" fill="#fff" /><g fill="#fff" stroke="#111" strokeWidth="8"><circle cx="48" cy="106" r="9" /><circle cx="114" cy="106" r="9" /></g></>],
  [1, <><g stroke="#8b8b8b" strokeWidth="3.500" fill="none"><path d="M68 65L148 89L116 157L20 120ZM56 79L142 103M44 92L132 122M32 106L124 140M88 71L42 129M108 77L66 138M128 83L90 147" /></g><path d="M86 106L106 76" stroke="#37a02c" strokeWidth="9" /><path d="M86 106L138 119" stroke="#c42020" strokeWidth="8" /><Sq at="84,105" /></>],
  [1, <><circle cx="63" cy="72" r="17" fill="#fbe44e" stroke="#a05a10" strokeWidth="5" /><rect x="93" y="67" width="36" height="35" fill="#fbe44e" stroke="#a05a10" strokeWidth="5" /><path d="M76 108L95 139H57Z" fill="none" stroke="#a0521c" strokeWidth="5" /><Line d="M127 32H146V50M21 136V155H41" /></>],
  [1, <g stroke="#000" strokeWidth="5"><path d="M84 36C56 36 42 58 46 80C50 96 64 104 66 120V140C70 154 98 154 102 140V120C104 104 118 96 122 80C126 58 112 36 84 36Z" fill="#a4a4a4" /><path d="M56 62C60 44 108 44 112 62C108 84 60 84 56 62Z" fill="#cfcfcf" stroke="none" /><path d="M68 122H100V132H68Z" fill="#eee" stroke="none" /></g>],

  [1, <><path d="M64 76V64C64 36 104 36 104 64V76" fill="none" stroke={G} strokeWidth="10" /><rect x="50" y="77" width="68" height="61" rx="2" fill="#989898" stroke={G} strokeWidth="5" /><path d="M66 100H102M66 118H102" stroke="#d0d0d0" strokeWidth="4" /></>],
  [1, <g stroke={G} strokeWidth="5" strokeLinejoin="round"><path d="M33 42L136 66V124L76 150L33 92Z" fill="#1a2a9c" /><path d="M33 70L76 134L82 118L40 56Z" fill="#6b8cf8" stroke="none" /><path d="M35 56L78 118L135 96V112L78 136Z" fill="#444" stroke="none" /><path d="M36 50L78 108L135 84V98L78 122Z" fill="#c8301c" stroke="none" /><path d="M34 43L135 67V78C118 76 96 84 76 108Z" fill="#f0946c" stroke="none" /><path d="M33 42L136 66V124L76 150L33 92Z" fill="none" /></g>],
  [1, <><circle cx="84" cy="93" r="57" fill={G} />{Array.from({ length: 36 }, (_, i) => { const a = (i * 10 * Math.PI) / 180; const b = ((i * 10 + 11) * Math.PI) / 180; return <path key={i} fill="none" stroke={`hsl(${i * 10},88%,52%)`} strokeWidth="22" d={`M${84 + 43 * Math.sin(a)} ${93 - 43 * Math.cos(a)}A43 43 0 0 1 ${84 + 43 * Math.sin(b)} ${93 - 43 * Math.cos(b)}`} />; })}<circle cx="84" cy="93" r="31" fill="#363a3b" stroke={G} strokeWidth="4" /></>],
  [0, <Ball />],
  [1, <><path d="M21 22V164M42 22V164M63 22V164M84 22V164M105 22V164M126 22V164M147 22V164M13 30H155M13 51H155M13 72H155M13 93H155M13 114H155M13 135H155M13 156H155" stroke="#202324" strokeWidth="4" /><Ball /></>],

  [1, <><circle cx="82" cy="87" r="51" fill="url(#deepBall)" stroke="#000" strokeWidth="5" /><ellipse cx="60" cy="66" rx="18" ry="14" transform="rotate(-40 60 66)" fill="#d6e4ff" opacity="0.9" /><path d="M88 126C106 124 118 112 118 98C110 108 98 116 88 126Z" fill="#8fc4f4" /></>],
  [1, <g stroke="#000" strokeWidth="6" strokeLinejoin="round"><path d="M147 31L80 50C84 76 104 96 128 98Z" fill="url(#fire)" /><ellipse cx="104" cy="74" rx="32" ry="12" transform="rotate(45 104 74)" fill="#ffe9a8" strokeWidth="4" /></g>],
  [1, <><Line d="M18 36H68M18 102H68M75 110V158M141 110V140M33 48V92M25 58L33 48L41 58M25 82L33 92L41 82M88 144H130M98 136L88 144L98 152" strokeWidth="4.500" /><Sq at="78,39 78,99 138,99" /></>],
];

const ToolIcon = ({ menu, children }) => (
  <svg width="60" height="60" viewBox="0 0 180 180">
    {children}
    {menu ? <path d="M127 135h29l-14.500 30z" fill="#e9e9e9" /> : null}
  </svg>
);

const snaps = [
  ["End"], ["Near"], ["Point"], ["Midpoint"], ["Center"], ["Intersection"], ["Perpendicular"], ["Tangent"], ["Quadrant"], ["Knot"],
  ["Vertex", "on"], ["On curve", "off"], ["On surface", "off"], ["On polysurface", "off"], ["On mesh", "off"], ["Project"], ["SmartTrack", "on"],
];

const Sidebar = () => (
  <Column>
    <SideHead />
    <Rule />
    <CommandField>Command</CommandField>
    <Palette>
      {tools.map(([menu, art], i) => (
        <ToolIcon key={i} menu={menu}>{art}</ToolIcon>
      ))}
    </Palette>
    <Rule $c="#858686" />
    <SnapList>
      <CheckRow><MarkSlot><Radio $on /></MarkSlot><Caption>Persistent</Caption></CheckRow>
      <CheckRow><MarkSlot><Radio /></MarkSlot><Caption>One shot</Caption></CheckRow>
      {snaps.map(([name, s], i) => (
        <CheckRow key={name} $gap={i ? 0 : 11} $off={s === "off"}>
          <MarkSlot><Box $on={s === "on"} $off={s === "off"}>{s === "on" && <Tick />}</Box></MarkSlot>
          <Caption>{name}</Caption>
        </CheckRow>
      ))}
      <CheckRow $gap={36}><MarkSlot><Box /></MarkSlot><Caption>Disable all</Caption></CheckRow>
    </SnapList>
  </Column>
);

const Viewports = () => (
  <Center>
    <TabBar>
      <LayoutIcon viewBox="0 0 30 27" fill="none" stroke="#56b4dc" strokeWidth="1.800">
        <path d="M1 1h28v25H1zM15 1v25M1 13.500h28" />
        <path d="M1 2h7M15 2h7M1 14.500h7M15 14.500h7" strokeWidth="3" />
      </LayoutIcon>
      <LayoutIcon viewBox="0 0 30 27" fill="none" stroke="#c4c4c4" strokeWidth="1.600">
        <path d="M1 1h28v25H1z" />
        <path d="M1 2.500h7" strokeWidth="4" />
      </LayoutIcon>
      <Tab $w={223} $first>Perspective</Tab>
      <Tab $w={125} $on>Top</Tab>
      <Tab $w={144}>Front</Tab>
      <Tab $w={142}>Right</Tab>
      <Layouts>Layouts...</Layouts>
    </TabBar>
    <Views>
      <View><TopDrawing /><ViewTag $w={62} $on>Top</ViewTag></View>
      <View><PerspectiveDrawing /><ViewTag $w={160}>Perspective</ViewTag></View>
      <View><FrontDrawing /><ViewTag $w={82}>Front</ViewTag></View>
      <View><RightDrawing /><ViewTag $w={82}>Right</ViewTag></View>
    </Views>
  </Center>
);

const PanelHeading = ({ children }) => (
  <PanelTitle>
    <span />
    <span>{children}</span>
    <GearButton><Gear /><Caret /></GearButton>
  </PanelTitle>
);

const NumberFields = ({ rows }) => (
  <FieldGroup>
    {rows.map(([k, v]) => (
      <Field key={k} $label={167} $w={118} $mb={18}><span>{k}</span><Input>{v}</Input></Field>
    ))}
  </FieldGroup>
);

const Inspector = () => (
  <Column>
    <PanelHead>
      <PanelHeading>Properties: Viewport</PanelHeading>
      <IconRow $h={58} $gap={14} $inset={12}>
        <svg width="46" height="36" viewBox="0 0 46 36" fill="none" stroke="#2f7af6" strokeWidth="2.200">
          <path d="M2 9h8l5-7h16l5 7h8v24H30M16 33H2z" />
          <path d="M2 9h10M34 9h10" />
          <circle cx="23" cy="21" r="13" /><circle cx="23" cy="21" r="9" />
        </svg>
        <svg width="46" height="42" viewBox="0 0 46 42" fill="none" stroke="#9a9b9b">
          <rect x="1.500" y="1.500" width="43" height="39" strokeWidth="2.400" />
          <rect x="5.500" y="6" width="35" height="29" stroke="#666" strokeWidth="1.600" />
          <rect x="10" y="10.500" width="26" height="20" stroke="#777" strokeWidth="1.800" />
        </svg>
      </IconRow>
    </PanelHead>
    <Rule />
    <Form>
      <Field $label={91} $w={431} $mb={13}><span>Title:</span><Input>Top</Input></Field>
      <Field $label={91} $w={431}><span>Size:</span><span>1587 x 1110</span></Field>
      <Separator $mt={20} />
      <Section $mt={13}>Projection</Section>
      <Options>
        <CheckRow><MarkSlot><Radio $on /></MarkSlot><Caption>Parallel</Caption></CheckRow>
        <CheckRow><MarkSlot><Radio /></MarkSlot><Caption>Perspective</Caption></CheckRow>
        <CheckRow><MarkSlot><Radio /></MarkSlot><Caption>Two point perspective</Caption></CheckRow>
      </Options>
      <Separator $mt={27} />
      <Section $mt={13}>Wallpaper</Section>
      <Chooser><span>Choose...</span><Updown /></Chooser>
      <CheckRow $off><MarkSlot $w={73} $pl={38}><Box $off /></MarkSlot><Caption>Show wallpaper</Caption></CheckRow>
      <CheckRow $off $gap={4}><MarkSlot $w={73} $pl={38}><Box $off /></MarkSlot><Caption>Show wallpaper as gray scale</Caption></CheckRow>
      <Separator $mt={31} />
      <Section $mt={13}>Camera</Section>
      <NumberFields rows={[["Lens length:", "50"], ["Rotation:", "0"], ["X location:", "25.16"], ["Y location:", "-1.3"], ["Z location:", "56.49"]]} />
      <Separator $mt={33} />
      <Section $mt={14}>Target</Section>
      <NumberFields rows={[["X target:", "25.16"], ["Y target:", "-1.3"]]} />
    </Form>
    <Rule $c="#858686" />
    <PanelHead>
      <PanelHeading>Panels: Layers</PanelHeading>
      <IconRow $h={60} $inset={12}>
        <IconSlot>
          <svg width="48" height="40" viewBox="0 0 48 40" fill="none" stroke="#2f7af6" strokeWidth="2.200">
            <path d="M24 4l22 12-22 13L2 16z" /><path d="M8 20l-6 4 22 13 22-13-6-4" />
          </svg>
        </IconSlot>
        <IconSlot>
          <svg width="30" height="40" viewBox="0 0 30 40" fill="none" stroke="#b0b0b0" strokeWidth="2">
            <path d="M2 2h18l8 8v27H2z" /><path d="M20 2v8h8" />
          </svg>
        </IconSlot>
        <IconSlot>
          <svg width="40" height="42" viewBox="0 0 40 42" fill="none" stroke="#b0b0b0" strokeWidth="2">
            <path d="M2 13L19 3l18 7v21L23 40 2 33zM2 13l21 6 14-9M23 19v21" />
          </svg>
        </IconSlot>
        <IconSlot>
          <svg width="44" height="42" viewBox="0 0 44 42" fill="none" stroke="#b0b0b0" strokeWidth="2">
            <path d="M8 31V8c0-3 1-5 4-5h26c5 0 5 5 4 6h-6c0-3 0-5 2-6M34 9v25c0 4-3 5-6 5H5c-5 0-5-7 0-7h20c4 0 4 4 1 4h-2M29 39c3 0 2-7-3-7" />
          </svg>
        </IconSlot>
        <IconSlot>
          <svg width="44" height="40" viewBox="0 0 44 40" fill="none" stroke="#b0b0b0" strokeWidth="2">
            <rect x="2" y="2" width="41" height="31" rx="2" /><rect x="5.500" y="5.500" width="34" height="22" /><path d="M18 33l-2 4h13l-2-4M9 38h27" />
          </svg>
        </IconSlot>
        <IconSlot>
          <svg width="42" height="42" viewBox="0 0 42 42" fill="none" stroke="#b0b0b0" strokeWidth="2">
            <circle cx="21" cy="21" r="19" /><path d="M13 15c0-11 16-10 16-1 0 7-8 6-8 13" strokeWidth="3" /><path d="M21 30v4" strokeWidth="4" />
          </svg>
        </IconSlot>
      </IconRow>
    </PanelHead>
    <Rule />
    <TableHead>
      <HeadCell $w={84}>Name</HeadCell>
      <HeadCell $w={46} /><HeadCell $w={46} /><HeadCell $w={46} /><HeadCell $w={60} /><HeadCell $w={48} />
      <HeadCell $w={114}>Linetype</HeadCell>
      <HeadCell $w={46} />
      <HeadCell $w={100}>Print...</HeadCell>
    </TableHead>
    <Rule $c="#505354" />
    <Table>
      <LayerRow>
        <Cell $w={68} $align="flex-end">L...</Cell>
        <Cell $w={76}><Radio $on /></Cell>
        <Cell $w={15}>
          <svg width="26" height="30" viewBox="0 0 28 30" opacity="0.75">
            <path d="M14 1C5 1 1 7 3 12c2 5 6 6 7 9h8c1-3 5-4 7-9 2-5-2-11-11-11z" fill="#c8942c" />
            <ellipse cx="14" cy="8" rx="8" ry="4.500" fill="#e6bc50" /><path d="M10 21h8v4c-1 3-7 3-8 0z" fill="#85878a" />
          </svg>
        </Cell>
        <Cell $w={76}>
          <svg width="32" height="30" viewBox="0 0 34 30" opacity="0.75">
            <path d="M18 14V8c0-7 13-7 13 0v6" fill="none" stroke="#6f6f6f" strokeWidth="5" />
            <rect x="2" y="13" width="22" height="15" fill="#b4702c" stroke="#7b7b7b" strokeWidth="2" /><rect x="4" y="16" width="12" height="4" fill="#d8974a" />
          </svg>
        </Cell>
        <Cell $w={30} $ml={2} $align="flex-start"><Swatch /></Cell>
        <Cell $w={64}><Disc /></Cell>
        <Cell $w={103} $align="flex-end"><span>Conti...</span><Updown /></Cell>
        <Cell $w={62}><Diamond /></Cell>
        <Cell $w={92} $align="flex-end"><span>Defa...</span><Updown /></Cell>
      </LayerRow>
    </Table>
    <Rule $c="#505354" />
    <PanelFoot>
      <FootButton $w={92}>
        <svg width="92" height="30" viewBox="0 0 92 30">
          <path d="M24 4v22M13 15h22" stroke="#fff" strokeWidth="2.400" /><path d="M46.500 0v31" stroke="#505353" strokeWidth="2" /><path d="M55 15h22" stroke="#8c8e8e" strokeWidth="2.400" />
        </svg>
      </FootButton>
      <FootButton $w={68}>
        <IconRow $h={30} $gap={15}><Gear c="#2b2e2e" hole="#666969" /><Caret c="#fff" /></IconRow>
      </FootButton>
    </PanelFoot>
  </Column>
);

export default function App() {
  return (
    <Stage>
      <Global />
      <Desktop>
        <Defs />
        <WindowShadow>
          <Window>
            <TitleBar>
              <TitleRow>
                <Lights>
                  <Light $color="#ec6a5e" $dot /><Light $color="#e0c04c" /><Light $color="#71be47" />
                </Lights>
                <Title>silverware-holder <Edited>— Edited</Edited></Title>
                <span />
              </TitleRow>
              <ToolRow>
                <LeftTools>
                  <PanelToggle $side="left" />
                  <Modes>
                    <Mode $w={162} $on $ls={0.4}>Grid Snap</Mode>
                    <Mode $w={120}>Ortho</Mode>
                    <Mode $w={121}>Planar</Mode>
                    <Mode $w={184} $on $ls={-0.3}>SmartTrack</Mode>
                    <Mode $w={143} $on $ls={-0.3}>Gumball</Mode>
                    <Mode $w={134}>History</Mode>
                  </Modes>
                </LeftTools>
                <LayerTools>
                  <svg width="104" height="44" viewBox="0 0 104 44" fill="none" strokeWidth="2.400">
                    <circle cx="19" cy="22" r="17" stroke="#8b8d8e" />
                    <rect x="15.500" y="18" width="8" height="8" fill="#c9cbcc" /><path d="M19 22h22" stroke="#b5b7b8" strokeWidth="2.800" />
                    <circle cx="83" cy="22" r="20" stroke="#b3b5b6" /><circle cx="83" cy="22" r="10" stroke="#b3b5b6" />
                  </svg>
                  <LayerPill><LayerSwatch />Layer 01</LayerPill>
                </LayerTools>
                <PanelToggle $side="right" />
              </ToolRow>
            </TitleBar>
            <Body>
              <Sidebar />
              <Viewports />
              <Inspector />
            </Body>
            <StatusBar>
              <svg width="28" height="22" viewBox="0 0 28 22"><path d="M0 2h28M0 8h28M0 14h28M0 20h28" stroke="#c8c8c8" strokeWidth="1.600" /></svg>
              <StatusText $w={3038} $pl={5}>Command: PointsOn</StatusText>
              <StatusText $w={147}>Millimeters</StatusText>
              <PlanePicker>CPlane<Updown c="#dfe0e0" /></PlanePicker>
              <StatusText $w={165}>X: 126.514</StatusText>
              <StatusText $w={169}>Y: -105.473</StatusText>
              <StatusText $w={100}>Z: 0.000</StatusText>
            </StatusBar>
            <WindowRim />
          </Window>
        </WindowShadow>
      </Desktop>
    </Stage>
  );
}
